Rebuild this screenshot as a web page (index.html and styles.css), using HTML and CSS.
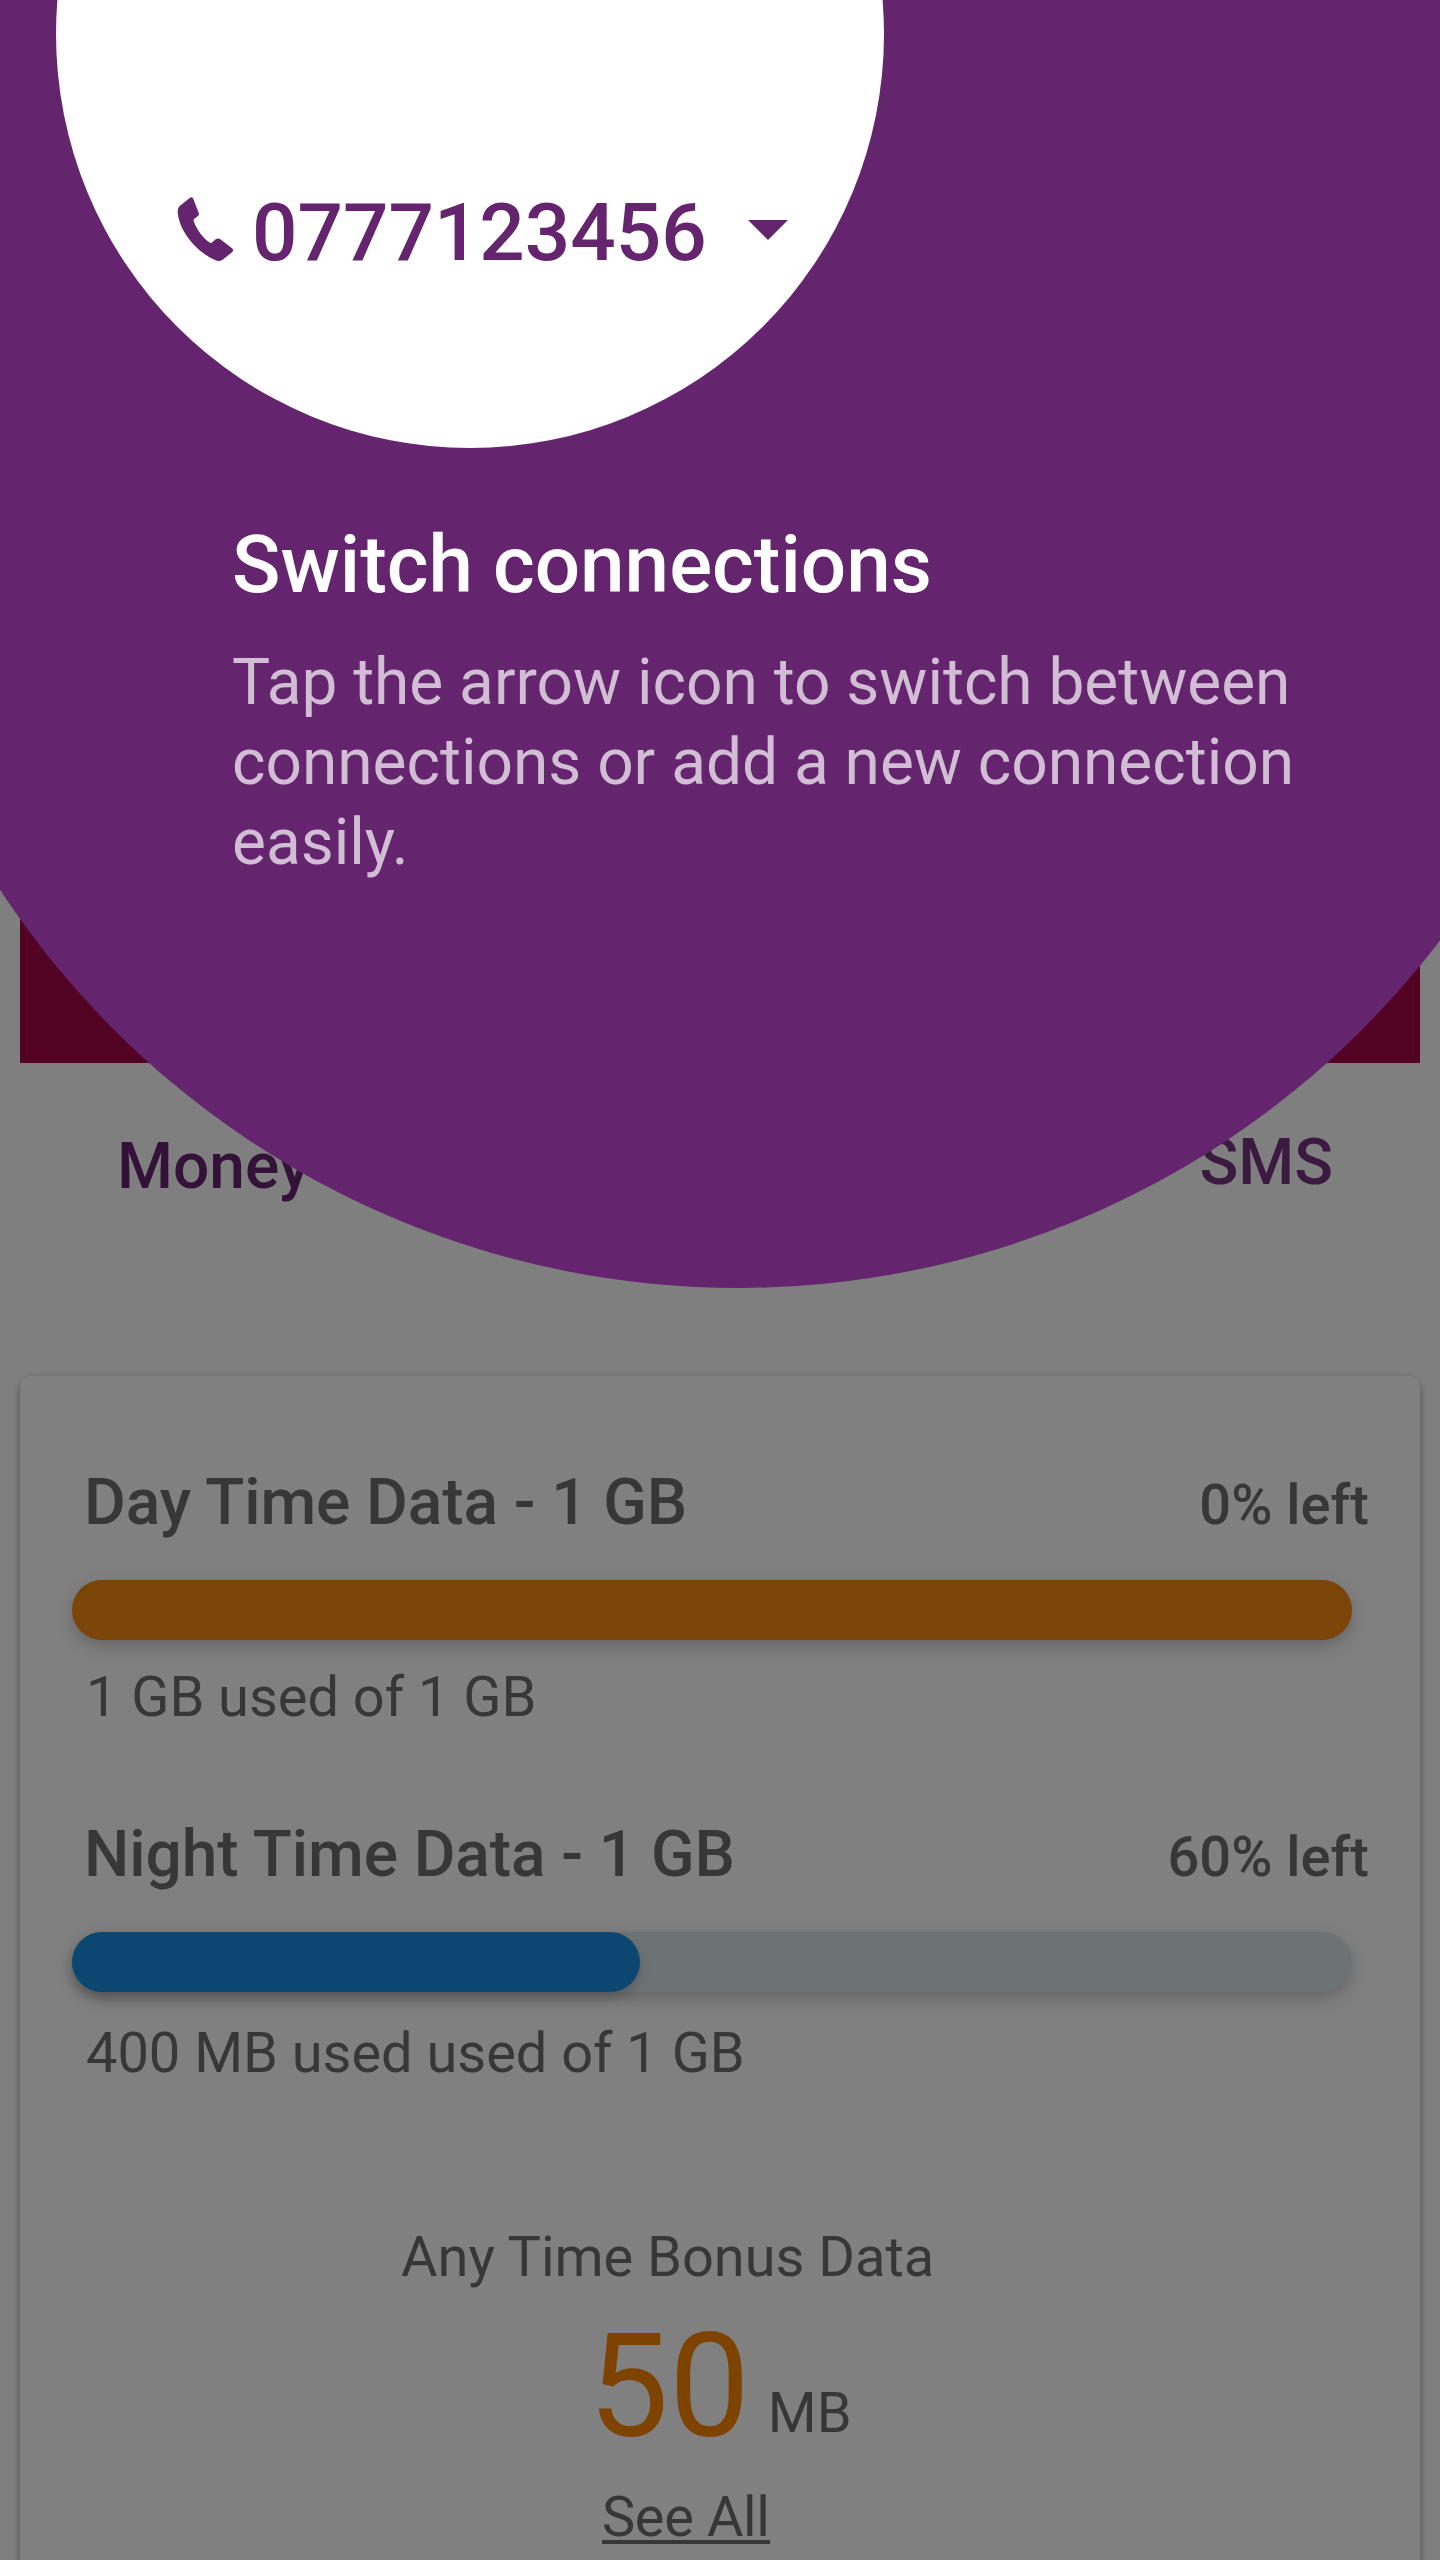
FILE: index.html
```html
<!DOCTYPE html>
<html lang="en">
<head>
<meta charset="utf-8">
<title>Data usage</title>
<link rel="stylesheet" href="styles.css">
</head>
<body>
<div class="screen">
  <main class="app">
    <div class="banner"></div>
    <nav class="tabs">
      <span class="tab tab-active">Money</span>
      <span class="tab tab-sms">SMS</span>
    </nav>
    <section class="card">
      <article class="usage">
        <header class="usage-head">
          <h2 class="usage-title">Day Time Data - 1 GB</h2>
          <span class="usage-left">0% left</span>
        </header>
        <div class="track"><div class="fill fill-day" style="width:100%"></div></div>
        <p class="usage-note note-day">1 GB used of 1 GB</p>
      </article>
      <article class="usage usage-night">
        <header class="usage-head">
          <h2 class="usage-title">Night Time Data - 1 GB</h2>
          <span class="usage-left">60% left</span>
        </header>
        <div class="track"><div class="fill fill-night" style="width:568px"></div></div>
        <p class="usage-note note-night">400 MB used used of 1 GB</p>
      </article>
      <div class="bonus">
        <p class="bonus-title">Any Time Bonus Data</p>
        <p class="bonus-amount"><span class="bonus-value">50</span><span class="bonus-unit">MB</span></p>
        <a class="see-all">See All</a>
      </div>
    </section>
  </main>

  <aside class="coach">
    <div class="coach-disc"></div>
    <div class="coach-spot"></div>
    <div class="coach-content">
      <div class="connection">
        <svg class="phone" viewBox="18 18 174 198" aria-hidden="true"><path d="M60 23Q66 19 69 25L86 68Q89 75 83 79L76 84Q69 88 71 93C80 119 98 143 118 157Q122 160 127 157L137 148Q143 144 150 147L186 175Q192 180 187 186L158 209Q147 216 135 210C88 190 28 130 23 66Q22 54 29 48Z"/></svg>
        <span class="number">0777123456</span>
        <svg class="caret" viewBox="0 0 40 20" aria-hidden="true"><path d="M0 0h40L20 20z"/></svg>
      </div>
      <h1 class="coach-title">Switch connections</h1>
      <p class="coach-text">Tap the arrow icon to switch between connections or add a new connection easily.</p>
    </div>
  </aside>
</div>
</body>
</html>
```
FILE: styles.css
```css
* { box-sizing: border-box; }

body {
  margin: 0;
  background: #808080;
  font-family: Roboto, "Liberation Sans", sans-serif;
}

h1, h2, p { margin: 0; font-weight: 400; }

.screen {
  position: relative;
  width: 1440px;
  height: 2560px;
  overflow: hidden;
  background: #7f7f7f;
  color: #373737;
}

/* Dimmed dashboard */
.app {
  display: flex;
  flex-direction: column;
  height: 2560px;
  padding: 400px 20px 0;
}

.banner {
  flex: none;
  height: 663px;
  background: #520222;
}

.tabs {
  display: flex;
  flex: none;
  justify-content: space-between;
  align-items: flex-start;
  height: 313px;
  padding: 60px 87px 0 97px;
}

.tab {
  font-size: 64px;
  line-height: 80px;
  font-weight: 500;
}

.tab-active { padding-top: 4px; color: #331138; }
.tab-sms { color: #3b1a40; }

.card {
  flex: none;
  height: 1240px;
  padding: 87px 52px 0;
  border-radius: 10px;
  background: #808080;
  box-shadow: 0 5px 9px rgba(0, 0, 0, .3), 0 0 4px rgba(0, 0, 0, .1);
}

.usage { width: 1297px; }
.usage-night { padding-top: 82px; }

.usage-head {
  display: flex;
  justify-content: space-between;
  align-items: baseline;
  height: 80px;
  padding-left: 12px;
}

.usage-title { font-size: 64px; line-height: 80px; font-weight: 500; letter-spacing: -.08px; }
.usage-left { font-size: 56px; line-height: 72px; font-weight: 500; }

.track {
  width: 1280px;
  height: 60px;
  margin-top: 37px;
  border-radius: 30px;
  background: #6d7375;
  box-shadow: 0 6px 16px rgba(0, 0, 0, .22);
}

.fill { height: 60px; border-radius: 30px; }
.fill-day { background: #7b4409; }
.fill-night { background: #0b4771; box-shadow: 0 6px 12px rgba(0, 0, 0, .2); }

.usage-note { padding-left: 14px; font-size: 56px; line-height: 72px; letter-spacing: -.04px; }
.note-day { padding-top: 21px; }
.note-night { padding-top: 25px; }

.bonus {
  display: flex;
  flex-direction: column;
  align-items: flex-start;
  padding: 132px 0 0 329px;
  font-size: 56px;
  line-height: 72px;
}

.bonus-title { letter-spacing: -.04px; }

.bonus-amount {
  display: flex;
  align-items: flex-start;
  gap: 18px;
  height: 160px;
  margin-top: 14px;
  padding-left: 187px;
}

.bonus-value { font-size: 144px; line-height: 160px; color: #7e4300; }
.bonus-unit { padding-top: 70px; }

.see-all {
  height: 63px;
  margin: 14px 0 0 201px;
  border-bottom: 4px solid #373737;
  letter-spacing: -.4px;
}

/* Feature discovery overlay */
.coach { position: absolute; inset: 0; }

.coach-disc,
.coach-spot { position: absolute; border-radius: 50%; }

.coach-disc {
  left: -145px;
  top: -478px;
  width: 1766px;
  height: 1766px;
  background: #65246e;
}

.coach-spot {
  left: 56px;
  top: -380px;
  width: 828px;
  height: 828px;
  background: #fff;
}

.coach-content { position: relative; padding: 185px 120px 0 176px; }

.connection {
  display: flex;
  align-items: flex-start;
  height: 96px;
  color: #65246e;
}

.phone { width: 58px; height: 66px; margin-top: 11px; fill: currentColor; }
.number { margin-left: 18px; font-size: 80px; line-height: 96px; font-weight: 500; }
.caret { width: 40px; height: 20px; margin: 35px 0 0 41px; fill: currentColor; }

.coach-title {
  margin: 236px 0 0 56px;
  font-size: 80px;
  line-height: 96px;
  font-weight: 500;
  color: #fff;
}

.coach-text {
  width: 1085px;
  margin: 30px 0 0 56px;
  font-size: 64px;
  line-height: 80px;
  letter-spacing: -.02px;
  color: #d1bdd4;
}
```
